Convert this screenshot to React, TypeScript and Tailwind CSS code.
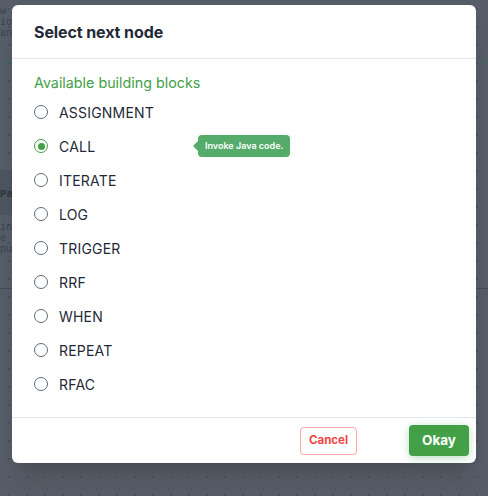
import React from "react";

const items = ["ASSIGNMENT", "CALL", "ITERATE", "LOG", "TRIGGER", "RRF", "WHEN", "REPEAT", "RFAC"];

function Backdrop() {
  return (
    <div className="absolute inset-0 bg-[#565d68]">
      <div className="absolute inset-0 bg-[radial-gradient(#4a515b_1px,transparent_1px)] [background-size:18px_18px]" />
      <div className="absolute left-0 top-[6px] text-[10px] leading-[11px] text-[#3c434c]" style={{ fontFamily: "'Liberation Mono', monospace" }}>
        <div>w</div><div>io</div><div>an</div>
      </div>
      <div className="absolute left-0 top-[62px] w-full h-px bg-[#3d6b5e]" />
      <div className="absolute left-0 top-[170px] w-[12px] h-[45px] bg-[#4d5560]" />
      <div className="absolute left-0 top-[186px] text-[11px] font-bold text-[#2f353d]" style={{ fontFamily: "'Liberation Mono', monospace" }}>Pa</div>
      <div className="absolute left-0 top-[222px] text-[10px] leading-[11px] text-[#3c434c]" style={{ fontFamily: "'Liberation Mono', monospace" }}>
        <div>in</div><div>e a</div><div>pu</div>
      </div>
      <div className="absolute left-0 top-[288px] w-full h-px bg-[#464d57]" />
    </div>
  );
}

export default function App() {
  return (
    <div className="relative w-[488px] h-[496px] overflow-hidden" style={{ fontFamily: "Inter, 'Noto Sans', sans-serif" }}>
      <Backdrop />
      <div className="relative pl-[12px] pt-[5px]">
        <div className="w-[464px] h-[458px] bg-white rounded-[6px] flex flex-col shadow-xl">
          <div className="h-[54px] flex items-center px-[22px] border-b border-[#e5e7eb] shrink-0">
            <h2 className="text-[16px] font-bold text-[#1f2937] tracking-[-0.1px]">Select next node</h2>
          </div>
          <div className="flex-1 px-[22px] pt-[14px]">
            <div className="text-[14.3px] text-[#43a047] leading-[20px]">Available building blocks</div>
            <div className="mt-[2px] flex flex-col">
              {items.map((it) => {
                const sel = it === "CALL";
                return (
                  <div key={it} className="h-[34px] flex items-center relative">
                    <span className={`w-[14px] h-[14px] rounded-full border-[1.5px] flex items-center justify-center ${sel ? "border-[#43a047]" : "border-[#5f6b7a]"}`}>
                      {sel && <span className="w-[7px] h-[7px] rounded-full bg-[#43a047]" />}
                    </span>
                    <span className="ml-[11px] text-[14px] text-[#1f2937] tracking-[0.2px]">{it}</span>
                    {sel && (
                      <div className="absolute left-[159px] top-[6px] h-[22px] flex items-center">
                        <div className="w-0 h-0 border-y-[5px] border-y-transparent border-r-[5px] border-r-[#55ac6a]" />
                        <div className="h-[22px] px-[7px] rounded-[4px] bg-[#55ac6a] text-white text-[9px] font-semibold flex items-center">Invoke Java code.</div>
                      </div>
                    )}
                  </div>
                );
              })}
            </div>
          </div>
          <div className="h-[46px] border-t border-[#e5e7eb] flex items-center justify-end px-[7px] shrink-0 gap-[52px]">
            <button className="w-[57px] h-[28px] rounded-[4px] border border-[#fca5a5] text-[#ef4444] text-[11.5px] font-bold">Cancel</button>
            <button className="w-[60px] h-[31px] rounded-[4px] bg-[#43a047] text-white text-[13.5px] font-bold shadow-[0_2px_8px_rgba(67,160,71,0.35)]">Okay</button>
          </div>
        </div>
      </div>
    </div>
  );
}
